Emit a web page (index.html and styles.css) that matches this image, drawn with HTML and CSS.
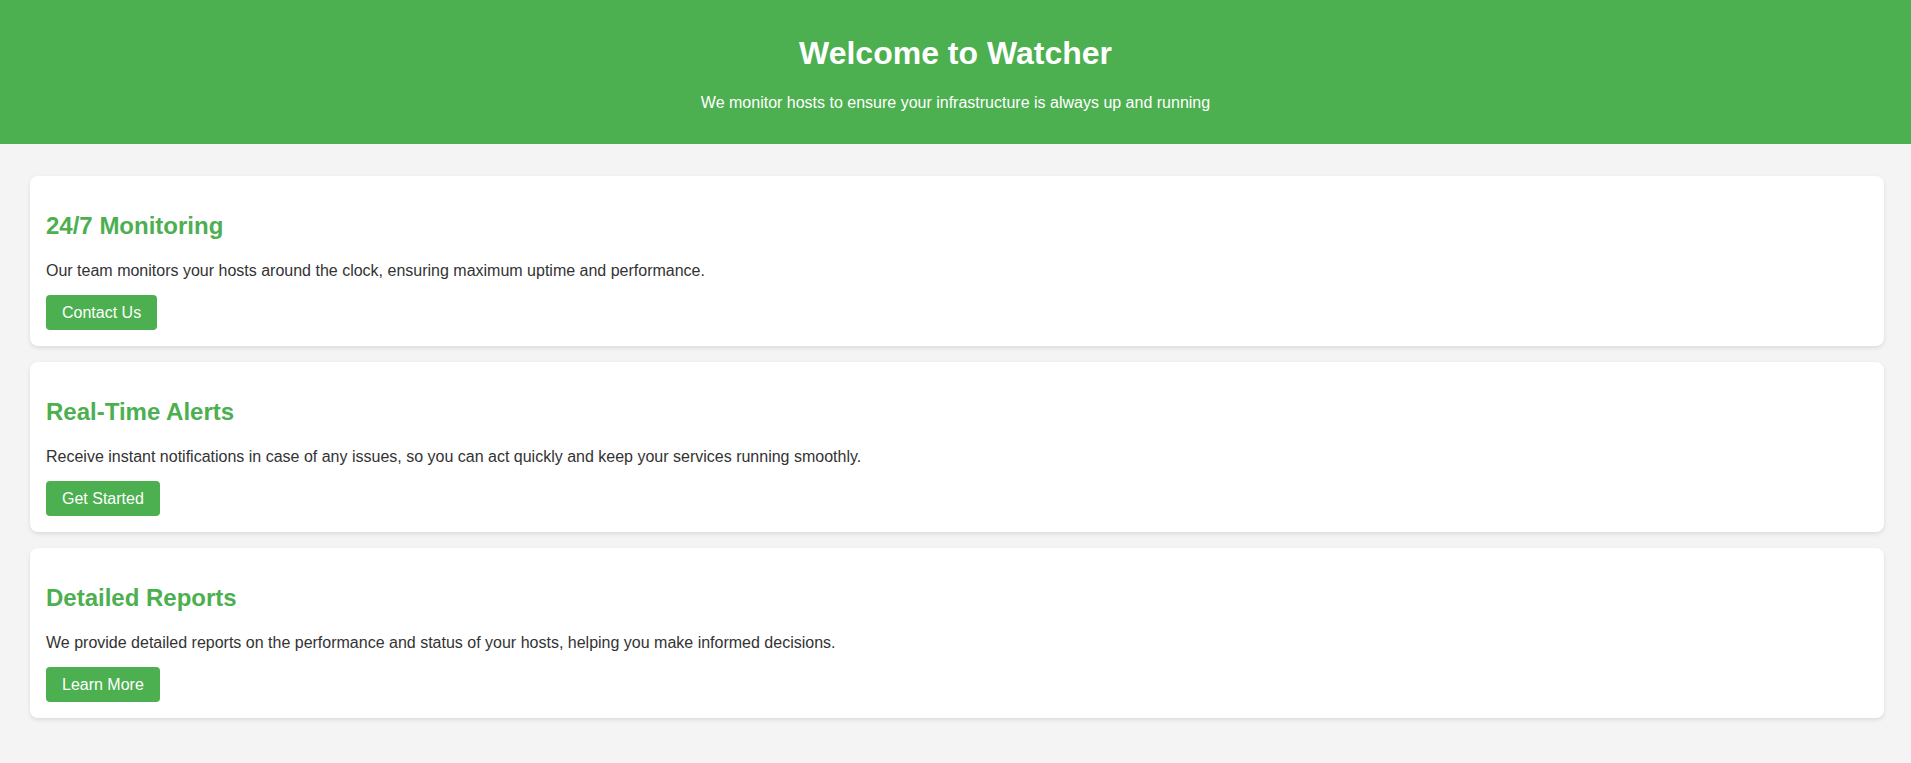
FILE: index.html
```html
<!DOCTYPE html>
<html lang="en">
<head>
<meta charset="utf-8">
<title>Watcher</title>
<link rel="stylesheet" href="styles.css">
</head>
<body>
<header class="hero">
  <h1 class="hero-title">Welcome to Watcher</h1>
  <p class="hero-sub">We monitor hosts to ensure your infrastructure is always up and running</p>
</header>
<main class="content">
  <section class="card">
    <h2 class="card-title">24/7 Monitoring</h2>
    <p class="card-text">Our team monitors your hosts around the clock, ensuring maximum uptime and performance.</p>
    <a class="btn" href="#">Contact Us</a>
  </section>
  <section class="card">
    <h2 class="card-title">Real-Time Alerts</h2>
    <p class="card-text">Receive instant notifications in case of any issues, so you can act quickly and keep your services running smoothly.</p>
    <a class="btn" href="#">Get Started</a>
  </section>
  <section class="card">
    <h2 class="card-title">Detailed Reports</h2>
    <p class="card-text">We provide detailed reports on the performance and status of your hosts, helping you make informed decisions.</p>
    <a class="btn" href="#">Learn More</a>
  </section>
</main>
</body>
</html>
```

FILE: styles.css
```css
* { box-sizing: border-box; }

body {
  margin: 0;
  font-family: "Liberation Sans", Arial, sans-serif;
  background: #f4f4f4;
  color: #333;
}

.hero {
  background: #4caf50;
  color: #fff;
  text-align: center;
  height: 144px;
  padding: 35px 20px 0;
}

.hero-title {
  margin: 0 0 22px;
  font-size: 32px;
  line-height: 36.8px;
  font-weight: bold;
}

.hero-sub {
  margin: 0;
  font-size: 16px;
  line-height: 18.4px;
}

.content {
  padding: 32px 27px 32px 30px;
  display: flex;
  flex-direction: column;
  gap: 16px;
}

.card {
  background: #fff;
  border-radius: 8px;
  box-shadow: 0 2px 4px rgba(0, 0, 0, 0.1);
  padding: 36px 16px 16px;
  display: flex;
  flex-direction: column;
  align-items: flex-start;
}

.card-title {
  margin: 0 0 22px;
  color: #4caf50;
  font-size: 24px;
  line-height: 27.6px;
  font-weight: bold;
}

.card-text {
  margin: 0 0 15px;
  font-size: 16px;
  line-height: 18.4px;
}

.btn {
  display: inline-block;
  background: #4caf50;
  color: #fff;
  text-decoration: none;
  font-size: 16px;
  line-height: 19px;
  padding: 8px 16px;
  border-radius: 4px;
}
```
